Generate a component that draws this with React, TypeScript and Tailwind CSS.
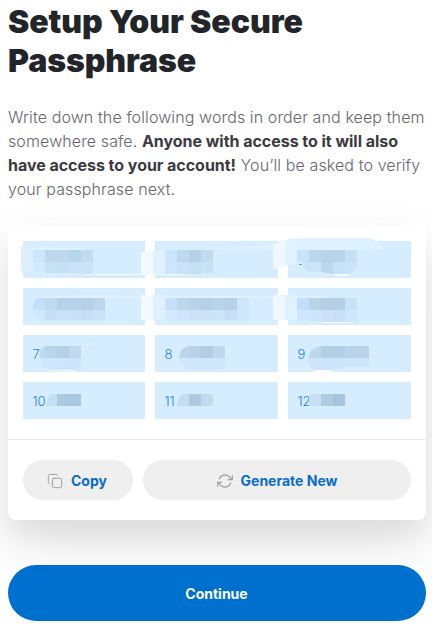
import { Copy } from "lucide-react";

type Block = [x: number, y: number, w: number, h: number, color: string];

const labels = ["", "", "", "", "", "", "7", "8", "9", "10", "11", "12"];

// mosaic blocks that hide the words
const blocks: Block[] = [
    // row 1
    [13, 21, 12, 25, "#dceffe"],
    [25, 25, 12, 12, "#cce6ff"],
    [37, 25, 12, 12, "#bdd7ec"],
    [49, 25, 12, 12, "#c0d8ee"],
    [61, 25, 12, 12, "#b6d6ec"],
    [73, 25, 12, 12, "#c4dcf3"],
    [25, 37, 12, 10, "#d2e9ff"],
    [37, 37, 12, 11, "#c6e0f4"],
    [49, 37, 12, 11, "#c6dff3"],
    [61, 37, 12, 11, "#cbe1f7"],
    [73, 37, 12, 12, "#cbe3f9"],
    [133, 27, 12, 22, "#f2f9ff"],
    [145, 26, 12, 23, "#dff0ff"],
    [157, 25, 12, 12, "#cae5fc"],
    [169, 25, 12, 12, "#c0d8ee"],
    [181, 25, 12, 12, "#b4d2e8"],
    [193, 25, 12, 12, "#c0daf0"],
    [157, 37, 12, 12, "#cce6fd"],
    [169, 37, 12, 12, "#cde2f7"],
    [181, 37, 12, 12, "#c5dff3"],
    [193, 37, 12, 11, "#c8e2f5"],
    // row 2
    [37, 73, 12, 12, "#bfdaee"],
    [49, 73, 12, 12, "#b7d1e8"],
    [61, 73, 12, 12, "#b8d3e9"],
    [73, 73, 12, 12, "#b5d0e8"],
    [85, 73, 12, 12, "#bed6ed"],
    [37, 85, 12, 10, "#c6dff5"],
    [49, 85, 12, 10, "#cbe1f7"],
    [61, 85, 12, 10, "#cae0f6"],
    [73, 85, 12, 10, "#c7dff3"],
    [85, 85, 12, 10, "#cbe1f8"],
    [133, 70, 12, 25, "#f2f9ff"],
    [145, 70, 12, 25, "#dff0ff"],
    [157, 73, 12, 12, "#c6e2fb"],
    [169, 73, 12, 12, "#bdd8ec"],
    [181, 73, 12, 12, "#b9d2e9"],
    [193, 73, 12, 12, "#b5d1e7"],
    [205, 73, 12, 12, "#b6d4ea"],
    [217, 73, 12, 12, "#b4d2e7"],
    [229, 73, 12, 12, "#cee5fc"],
    [157, 85, 12, 10, "#d4e9fe"],
    [169, 85, 12, 10, "#cfe4fa"],
    [181, 85, 12, 10, "#cde2f8"],
    [193, 85, 12, 10, "#cce2f6"],
    [205, 85, 12, 10, "#cae4f8"],
    [217, 85, 12, 10, "#c8def5"],
    [229, 85, 12, 10, "#d0e6fc"],
    [265, 70, 12, 25, "#edf7ff"],
    [277, 70, 12, 25, "#e0f1ff"],
    [289, 73, 12, 12, "#c0defd"],
    [301, 73, 12, 12, "#b9d3e9"],
    [313, 73, 12, 12, "#b7cfe6"],
    [325, 73, 12, 12, "#b3d0e6"],
    [337, 73, 12, 12, "#c8e3f8"],
    [289, 85, 12, 10, "#d0e6fe"],
    [301, 85, 12, 11, "#cee4fa"],
    [313, 85, 12, 12, "#cde2f9"],
    [325, 85, 12, 12, "#c7e0f7"],
    [337, 85, 12, 12, "#cfe7fc"],
    // row 3
    [37, 121, 12, 12, "#b9d5eb"],
    [49, 121, 12, 12, "#b4cfe6"],
    [61, 121, 12, 12, "#bfdaf0"],
    [49, 133, 12, 12, "#cee6fd"],
    [61, 133, 12, 12, "#cde4fb"],
    [181, 121, 12, 12, "#b9d2ea"],
    [193, 121, 12, 12, "#b0cee5"],
    [205, 121, 12, 12, "#bed8ef"],
    [313, 121, 12, 12, "#b3cfe5"],
    [325, 121, 12, 12, "#b3cfe6"],
    [337, 121, 24, 12, "#b8d3ea"],
    [337, 133, 24, 9, "#cee4fb"],
    // row 4
    [49, 169, 12, 12, "#acc9e1"],
    [61, 169, 12, 12, "#a7c8e0"],
    [181, 169, 12, 12, "#adcae1"],
    [193, 169, 12, 12, "#c3dbf2"],
    [301, 169, 12, 12, "#c8e0f7"],
    [313, 169, 12, 12, "#afcce3"],
    [325, 169, 12, 12, "#a6c6df"],
];

function Mosaic() {
    return (
        <svg
            className="pointer-events-none absolute left-0 top-0"
            width="418"
            height="214"
            viewBox="0 0 418 214"
            aria-hidden="true"
        >
            {/* brush smears */}
            <path d="M15 21 L25 22 L73 23 L82 26 L15 26Z" fill="#e0f1ff" />
            <path d="M22 46 L73 47 V49 H137 V50 H80 L68 48Z" fill="#f5fbff" />
            <path d="M132 49 H185 L172 50 H132Z" fill="#f2faff" />
            <path d="M157 25 L200 24 L232 22 L262 20 L281 15 V25Z" fill="#dff1ff" />
            <path d="M26 73 Q60 69 133 71 V73Z" fill="#dff1ff" />
            <path d="M157 71 H289 Q312 70 320 73 H157Z" fill="#dff1ff" />
            <path d="M265 19 L281 14 L297 13 H361 Q370 15 375 25 H265Z" fill="#def1ff" />
            <path d="M265 19 L277 16 V41 L265 44Z" fill="#eff7ff" />
            <path d="M277 16 L289 14 V39 L277 41Z" fill="#e2f1ff" />

            {/* third word of row 1 */}
            <rect x="289" y="25" width="12" height="12" fill="#c9e2fd" />
            <rect x="301" y="25" width="12" height="12" fill="#bdd7ec" />
            <rect x="313" y="25" width="24" height="12" fill="#b9d4ea" />
            <rect x="337" y="25" width="12" height="12" fill="#c5dff5" />
            <path d="M294 37 H313 V47 H303 Q296 46 294 37Z" fill="#cde3f8" />
            <path d="M313 37 H325 V49 L313 47Z" fill="#bcd7ec" />
            <rect x="325" y="37" width="12" height="12" fill="#c6e0f5" />
            <path d="M337 37 H349 V43 L342 49 H337Z" fill="#cbe2fa" />
            <path d="M323 49 H343 Q340 51 334 51 Q328 51 323 49Z" fill="#f7fcff" />
            <rect x="291" y="39" width="3" height="1" fill="#82bdf5" />
            <rect x="292" y="39" width="1" height="1" fill="#1a83e8" />

            {/* rounded brush ends */}
            <path d="M25 85 V80 Q26 75 30 73 H37 V85Z" fill="#c2dffe" />
            <path d="M25 85 H37 V95 Q27 95 25 85Z" fill="#d0e8ff" />
            <path d="M313 97 H345 L343 98 H316Z" fill="#f7fcff" />
            <path d="M31 133 Q31 124 37 121 V133Z" fill="#bedbf2" />
            <path d="M32 133 H49 V145 H41 Q33 143 32 133Z" fill="#d0e6fc" />
            <path d="M40 145 H67 V146 H42Z" fill="#f7fcff" />
            <path d="M74 121 L76 118 Q86 116 92 119 L90 121Z" fill="#daeeff" />
            <path d="M171 133 Q172 122 181 121 V133Z" fill="#bbd6ec" />
            <path d="M171 133 H217 V143 L213 145 H184 Q174 143 171 133Z" fill="#cfe6fb" />
            <path d="M300 133 Q303 122 313 121 V133Z" fill="#bdd7ec" />
            <path d="M300 133 H337 V142 L324 145 H306 Q300 141 300 133Z" fill="#cce3f9" />
            <path d="M304 145 H325 Q315 150 304 145Z" fill="#f9fdff" />
            <path d="M39 181 V176 Q41 170 45 169 H49 V181Z" fill="#c4dff5" />
            <path d="M169 181 Q170 171 175 169 H181 V181Z" fill="#c4dcf3" />
            {blocks.map(([x, y, w, h, color]) => (
                <rect key={`${x}-${y}`} x={x} y={y} width={w} height={h} fill={color} />
            ))}
        </svg>
    );
}

function RefreshIcon() {
    return (
        <svg
            width="16"
            height="16"
            viewBox="0 0 24 24"
            fill="none"
            stroke="#a0a0a5"
            strokeWidth="1.8"
            strokeLinecap="round"
            strokeLinejoin="round"
            aria-hidden="true"
        >
            <path d="M23 4v6h-6" />
            <path d="M1 20v-6h6" />
            <path d="M3.51 9a9 9 0 0 1 14.85-3.36L23 10M1 14l4.64 4.36A9 9 0 0 0 20.49 15" />
        </svg>
    );
}

function App() {
    return (
        <main className="h-[632px] w-[432px] overflow-hidden bg-white pl-2 pr-1.5 pt-[2px] font-['Inter',sans-serif]">
            <h1 className="text-[32px] leading-[39px] font-black tracking-[-0.06px] text-[#212529]">
                Setup Your Secure <br />
                Passphrase
            </h1>

            <p className="mt-[25px] text-base leading-6 font-light tracking-[0.11px] text-[#66666c]">
                Write down the following words in order and keep them <br />
                somewhere safe. <b className="font-bold tracking-[-0.03px] text-[#3a3a40]">Anyone with access to it will also <br />
                have access to your account!</b> You’ll be asked to verify <br />
                your passphrase next.
            </p>

            <section className="relative mt-[24px] rounded-lg bg-white shadow-[0_16px_24px_rgba(0,0,0,0.06),0_26px_60px_rgba(0,0,0,0.1)]">
                <div className="relative border-b border-[#ebebeb] px-[15px] pt-4 pb-5">
                    <div className="grid grid-cols-[122px_123px_123px] gap-[10px]">
                        {labels.map((label, i) => (
                            <div
                                key={i}
                                className="flex h-[37px] items-center bg-[#d6ecff] pt-0.5 pl-[9.5px] text-[13px] font-light tracking-[-0.2px] text-[#1a83e8]"
                            >
                                {label}
                            </div>
                        ))}
                    </div>
                    <Mosaic />
                </div>

                <div className="flex gap-[10px] px-[15px] py-5 text-sm font-bold text-[#0b6bcb]">
                    <button className="flex h-10 w-[110px] items-center justify-center gap-2 rounded-full bg-[#efefef] pt-0.5 pr-0.5">
                        <Copy size={16} strokeWidth={1.5} color="#a0a0a5" />
                        Copy
                    </button>
                    <button className="flex h-10 flex-1 items-center justify-center gap-2 rounded-full bg-[#efefef] pt-0.5">
                        <RefreshIcon />
                        Generate New
                    </button>
                </div>
            </section>

            <button className="relative mt-[45px] h-14 w-full rounded-full bg-[#0070cf] pt-0.5 pr-px text-sm font-bold text-white">
                Continue
            </button>
        </main>
    );
}
export default App;
